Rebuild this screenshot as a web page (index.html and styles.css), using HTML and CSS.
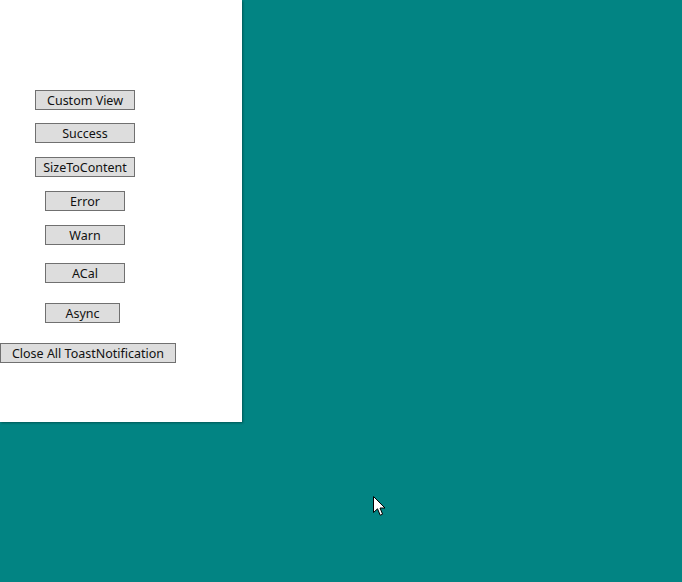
FILE: index.html
```html
<!DOCTYPE html>
<html>
<head>
<meta charset="utf-8">
<link rel="stylesheet" href="styles.css">
</head>
<body>
<div class="window">
  <button class="btn w100 m35 first">Custom View</button>
  <button class="btn w100 m35 gap13">Success</button>
  <button class="btn w100 m35 gap14">SizeToContent</button>
  <button class="btn w80 m45 gap14">Error</button>
  <button class="btn w80 m45 gap14">Warn</button>
  <button class="btn w80 m45 gap18">ACal</button>
  <button class="btn w75 m45 gap20">Async</button>
  <button class="btn w176 m0 gap20">Close All ToastNotification</button>
</div>
<svg class="cursor" width="13" height="21" viewBox="0 0 13 21">
  <path d="M0.5 0.5 L0.5 16.5 L4.5 12.8 L7.2 19.2 L9.6 18.2 L7 12 L12 12 Z" fill="#fff" stroke="#000" stroke-width="1" stroke-linejoin="miter"/>
</svg>
</body>
</html>
```
FILE: styles.css
```css
html, body {
  margin: 0;
  padding: 0;
}
body {
  width: 682px;
  height: 582px;
  background: #028483;
  position: relative;
  overflow: hidden;
  font-family: "Noto Sans", "Noto Sans CJK SC", sans-serif;
}
.window {
  width: 242px;
  height: 422px;
  background: #ffffff;
  box-shadow: 1px 1px 2px rgba(0, 0, 0, 0.35);
  display: flex;
  flex-direction: column;
  align-items: flex-start;
  box-sizing: border-box;
}
.btn {
  height: 20px;
  box-sizing: border-box;
  border: 1px solid #707070;
  background: #dddddd;
  color: #111;
  font-family: "Noto Sans", "Noto Sans CJK SC", sans-serif;
  font-size: 12.5px;
  line-height: 16px;
  padding: 1px 0 0 0;
  border-radius: 0;
  text-align: center;
  white-space: nowrap;
}
.w100 { width: 100px; }
.w80 { width: 80px; }
.w75 { width: 75px; }
.w176 { width: 176px; }
.m35 { margin-left: 35px; }
.m45 { margin-left: 45px; }
.m0 { margin-left: 0; }
.first { margin-top: 90px; }
.gap13 { margin-top: 13px; }
.gap14 { margin-top: 14px; }
.gap18 { margin-top: 18px; }
.gap20 { margin-top: 20px; }
.cursor {
  position: absolute;
  left: 373px;
  top: 496px;
}
```
